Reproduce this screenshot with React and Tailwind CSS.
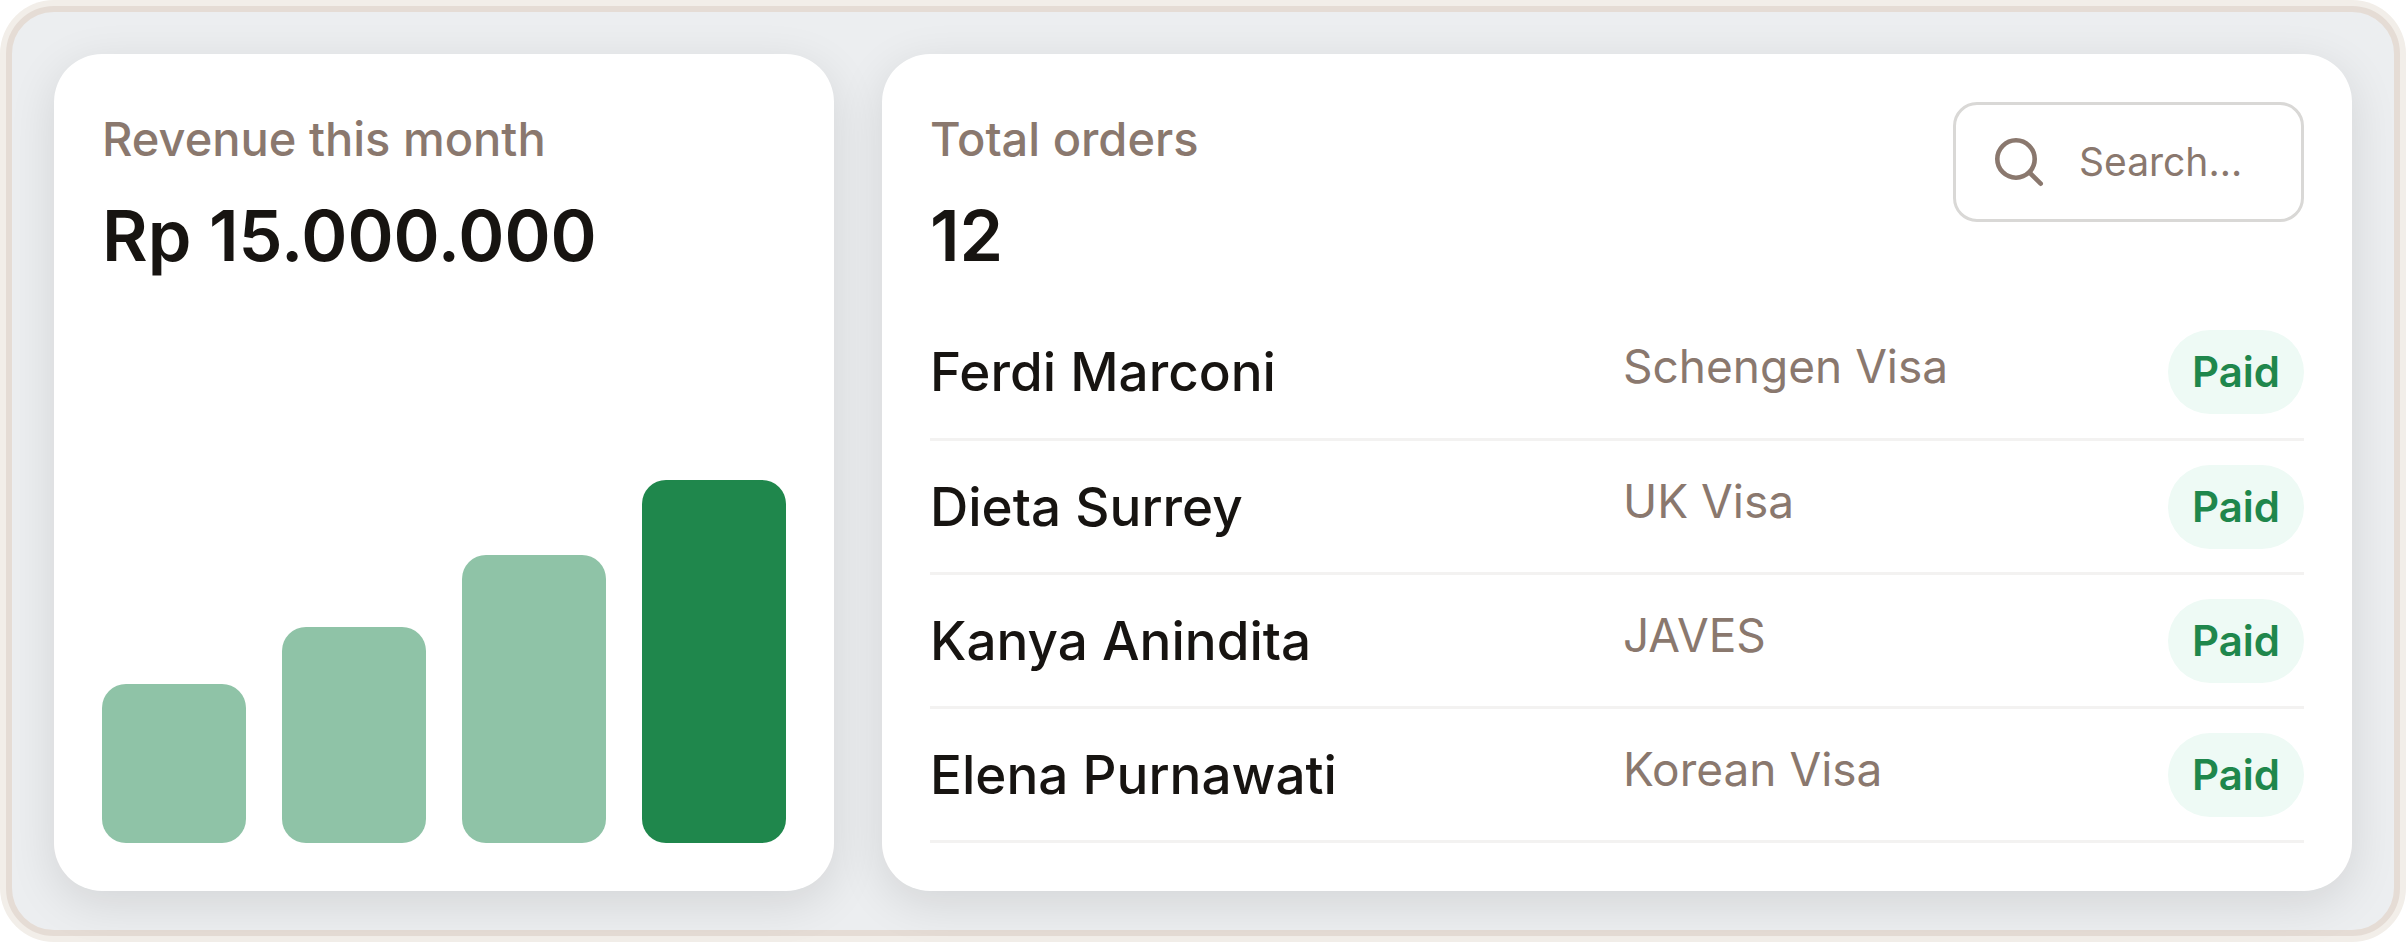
import React, { useState } from 'react';

const bars = [
  { id: 1, height: 159, color: 'bg-[#8fc3a7]' },
  { id: 2, height: 216, color: 'bg-[#8fc3a7]' },
  { id: 3, height: 288, color: 'bg-[#8fc3a7]' },
  { id: 4, height: 363, color: 'bg-[#1f874c]' },
];

const orders = [
  { name: 'Ferdi Marconi', type: 'Schengen Visa', status: 'Paid' },
  { name: 'Dieta Surrey', type: 'UK Visa', status: 'Paid' },
  { name: 'Kanya Anindita', type: 'JAVES', status: 'Paid' },
  { name: 'Elena Purnawati', type: 'Korean Visa', status: 'Paid' },
];

const Card = ({ className, children }) => (
  <section
    className={`flex flex-col rounded-[48px] bg-white p-12 shadow-[0_12px_48px_rgba(0,0,0,0.11)] ${className}`}
  >
    {children}
  </section>
);

const Stat = ({ label, value }) => (
  <div>
    <h2 className="text-[47px] leading-[74px] font-medium text-[#8a786e]">{label}</h2>
    <p className="mt-3 text-[70px] leading-[96px] font-semibold text-[#171411]">{value}</p>
  </div>
);

const SearchIcon = () => (
  <svg className="size-[60px] shrink-0" viewBox="0 0 60 60" fill="none" stroke="currentColor" strokeWidth="4.6" strokeLinecap="round" strokeLinejoin="round" aria-hidden="true">
    <circle cx="27" cy="27" r="18.7" />
    <path d="M51.7 51.7 40.5 40.5" />
  </svg>
);

const App = () => {
  const [search, setSearch] = useState('');

  const visibleOrders = orders.filter((order) =>
    order.name.toLowerCase().includes(search.toLowerCase())
  );

  return (
    <main className="min-h-screen flex rounded-[54px] bg-[#f2eee9] p-1.5 font-['Inter','Liberation_Sans',sans-serif]">
      <div className="flex flex-1 gap-12 rounded-[48px] border-6 border-[#e5dcd5] bg-[#eceef0] px-[42px] pt-[42px] pb-[39px]">
        {/* Revenue chart */}
        <Card className="w-[34%] max-w-[780px]">
          <Stat label="Revenue this month" value="Rp 15.000.000" />
          <div className="mt-auto flex items-end gap-9">
            {bars.map((bar) => (
              <div
                key={bar.id}
                className={`flex-1 rounded-3xl ${bar.color}`}
                style={{ height: bar.height }}
              />
            ))}
          </div>
        </Card>

        {/* Orders list */}
        <Card className="flex-1">
          <div className="flex items-start justify-between">
            <Stat label="Total orders" value="12" />
            <label className="flex h-[120px] w-[351px] items-center gap-[30px] rounded-3xl border-3 border-[#d9d8d6] px-[33px] text-[#8a786e]">
              <SearchIcon />
              <input
                type="text"
                aria-label="Search orders"
                placeholder="Search..."
                className="w-full min-w-0 bg-transparent text-[39px] outline-none placeholder:text-[#8a786e]"
                value={search}
                onChange={(e) => setSearch(e.target.value)}
              />
            </label>
          </div>

          <table className="mt-auto w-full table-fixed">
            <tbody>
              {visibleOrders.map((order) => (
                <tr key={order.name} className="h-[134px] border-b-3 border-[#f3f2f1] align-top">
                  <td className="pt-6 text-[53px] leading-[84px] font-medium text-[#171411]">{order.name}</td>
                  <td className="w-[501px] pt-6 text-[46px] leading-[72px] text-[#8a786e]">{order.type}</td>
                  <td className="w-[180px] pt-6 text-right">
                    <span className="inline-block rounded-full bg-[#eefaf5] px-6 text-[42px] leading-[84px] font-semibold text-[#1f874c]">
                      {order.status}
                    </span>
                  </td>
                </tr>
              ))}
            </tbody>
          </table>
        </Card>
      </div>
    </main>
  );
};

export default App;
